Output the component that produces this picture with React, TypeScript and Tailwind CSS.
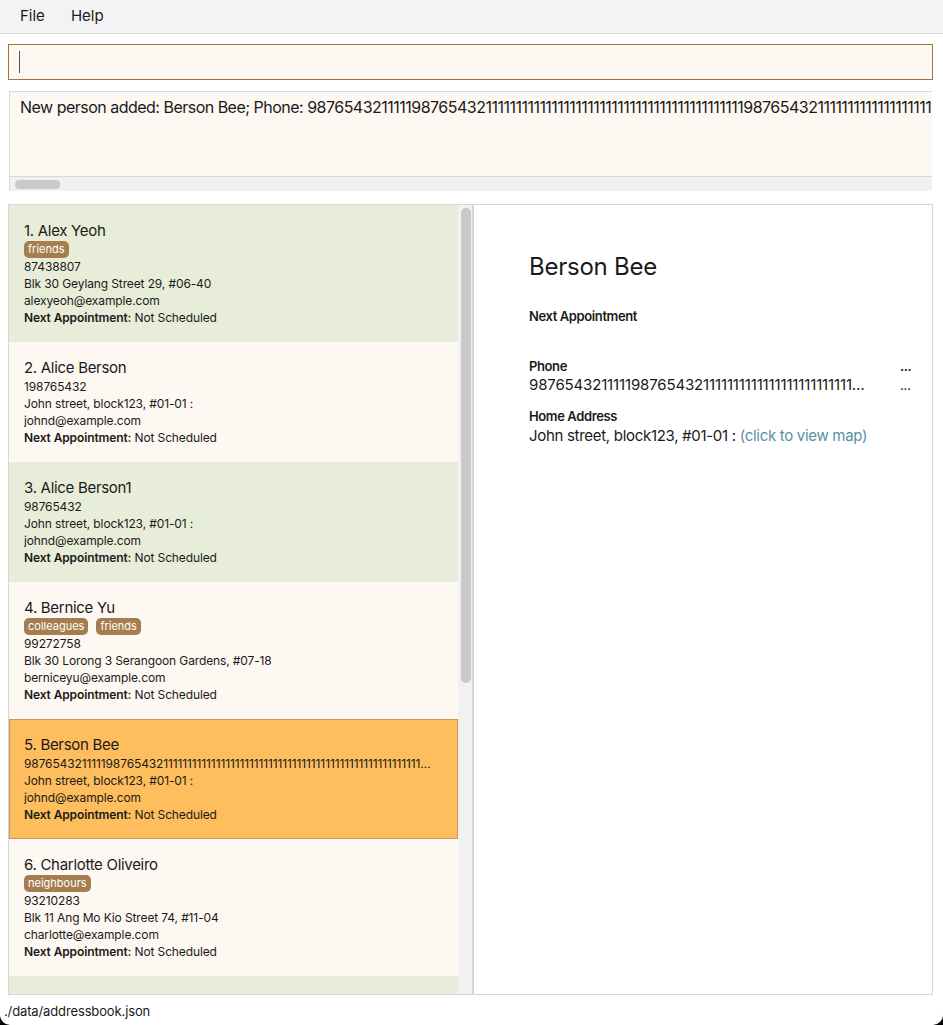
import React from "react";

type Person = {
  name: string;
  tags: string[];
  phone: string;
  address: string;
  email: string;
};

const LONG_PHONE =
  "98765432111119876543211111111111111111111111111111111111111111111111111111111111111111111111111111";

const people: Person[] = [
  { name: "Alex Yeoh", tags: ["friends"], phone: "87438807", address: "Blk 30 Geylang Street 29, #06-40", email: "alexyeoh@example.com" },
  { name: "Alice Berson", tags: [], phone: "198765432", address: "John street, block123, #01-01 :", email: "johnd@example.com" },
  { name: "Alice Berson1", tags: [], phone: "98765432", address: "John street, block123, #01-01 :", email: "johnd@example.com" },
  { name: "Bernice Yu", tags: ["colleagues", "friends"], phone: "99272758", address: "Blk 30 Lorong 3 Serangoon Gardens, #07-18", email: "berniceyu@example.com" },
  { name: "Berson Bee", tags: [], phone: LONG_PHONE, address: "John street, block123, #01-01 :", email: "johnd@example.com" },
  { name: "Charlotte Oliveiro", tags: ["neighbours"], phone: "93210283", address: "Blk 11 Ang Mo Kio Street 74, #11-04", email: "charlotte@example.com" },
  { name: "David Li", tags: ["family"], phone: "91031282", address: "Blk 436 Serangoon Gardens Street 26, #16-43", email: "lidavid@example.com" },
];

const SELECTED = 4;

function PersonCard({ person, index }: { person: Person; index: number }) {
  const selected = index === SELECTED;
  const bg = selected
    ? "bg-[#ffbe5d] border border-[#c99a56]"
    : index % 2 === 0
    ? "bg-[#e8edd9] border border-transparent"
    : "bg-[#fdf8f2] border border-transparent";

  return (
    <div className={`${bg} pl-[14px] pr-[22px] pt-[15px] pb-[15px] shrink-0`}>
      <div className="text-[15px] leading-[20px] tracking-[-0.02em] text-[#1a1a1a]">
        {index + 1}. {person.name}
      </div>
      {person.tags.length > 0 && (
        <div className="flex h-[17px] gap-[8px]">
          {person.tags.map((t) => (
            <span
              key={t}
              className="rounded-[5px] bg-[#a57d4e] px-[4px] text-[11px] leading-[17px] text-white"
            >
              {t}
            </span>
          ))}
        </div>
      )}
      <div className="text-[12px] leading-[17px] tracking-[-0.01em] text-[#1a1a1a]">
        <div className="truncate">{person.phone}</div>
        <div className="truncate">{person.address}</div>
        <div className="truncate">{person.email}</div>
        <div>
          <span className="font-semibold">Next Appointment:</span> Not Scheduled
        </div>
      </div>
    </div>
  );
}

export default function App() {
  return (
    <div
      className="h-[1025px] w-[943px] bg-black"
      style={{ fontFamily: "Inter, 'Noto Sans', sans-serif" }}
    >
      <div className="flex h-full w-full flex-col overflow-hidden rounded-b-[10px] bg-white text-[#1a1a1a]">
        {/* menu bar */}
        <div className="flex h-[34px] shrink-0 items-center gap-[26px] border-b border-[#d6d6d6] bg-[#f3f3f3] pl-[20px] text-[15px]">
          <span>File</span>
          <span>Help</span>
        </div>

        {/* command box */}
        <div className="ml-[8px] mt-[10px] flex h-[36px] w-[925px] shrink-0 items-center border border-[#a47538] bg-[#fdf8f2] pl-[10px]">
          <div className="h-[22px] w-px bg-[#555]" />
        </div>

        {/* result display */}
        <div className="ml-[9px] mt-[11px] flex h-[100px] w-[923px] shrink-0 flex-col border-t border-l border-[#d9d9d9]">
          <div className="relative flex-1 overflow-hidden bg-[#fdf8f2] border-b border-[#d9d9d9]">
            <div className="absolute left-[10px] top-[5px] whitespace-nowrap text-[16px] leading-[20px] tracking-[-0.032em]">
              New person added: Berson Bee; Phone: 98765432111119876543211111111111111111111111111111111111111111119876543211111111111111111111
            </div>
          </div>
          <div className="flex h-[14px] shrink-0 items-center rounded-br-[3px] bg-[#f1f1f1] pl-[5px]">
            <div className="h-[9px] w-[45px] rounded-[4px] bg-[#c9c9c9]" />
          </div>
        </div>

        {/* main panels */}
        <div className="ml-[8px] mt-[13px] flex h-[791px] w-[925px] shrink-0">
          <div className="flex w-[466px] border border-[#d6d6d6]">
            <div className="flex w-[449px] flex-col overflow-hidden">
              {people.map((p, i) => (
                <PersonCard key={i} person={p} index={i} />
              ))}
            </div>
            <div className="w-[14px] bg-[#f1f1f1] pl-[3px] pt-[3px]">
              <div className="h-[475px] w-[10px] rounded-[5px] bg-[#c9c9c9]" />
            </div>
            <div className="w-px bg-[#d6d6d6]" />
          </div>

          <div className="flex-1 border-y border-r border-[#d6d6d6] bg-white pl-[55px] pr-[23px] pt-[47px]">
            <div className="text-[24px] leading-[30px] tracking-[-0.01em]">Berson Bee</div>
            <div className="mt-[26px] text-[13px] font-semibold leading-[17px] tracking-[-0.03em]">
              Next Appointment
            </div>
            <div className="mt-[33px] flex text-[13px] font-semibold leading-[17px] tracking-[-0.03em]">
              <span className="flex-1">Phone</span>
              <span className="w-[9px]">...</span>
            </div>
            <div className="flex text-[15px] leading-[20px] tracking-[-0.01em]">
              <span className="w-[340px] truncate">{LONG_PHONE}</span>
              <span className="flex-1" />
              <span className="w-[9px] text-[13px]">...</span>
            </div>
            <div className="mt-[13px] text-[13px] font-semibold leading-[17px] tracking-[-0.03em]">
              Home Address
            </div>
            <div className="mt-[1px] text-[15px] leading-[20px] tracking-[-0.02em]">
              John street, block123, #01-01 :{" "}
              <span className="text-[#5b8fa9]">(click to view map)</span>
            </div>
          </div>
        </div>

        {/* status bar */}
        <div className="flex h-[29px] shrink-0 items-center pl-[4px] pt-[3px] text-[13px] leading-[17px] tracking-[-0.01em]">
          ./data/addressbook.json
        </div>
      </div>
    </div>
  );
}
